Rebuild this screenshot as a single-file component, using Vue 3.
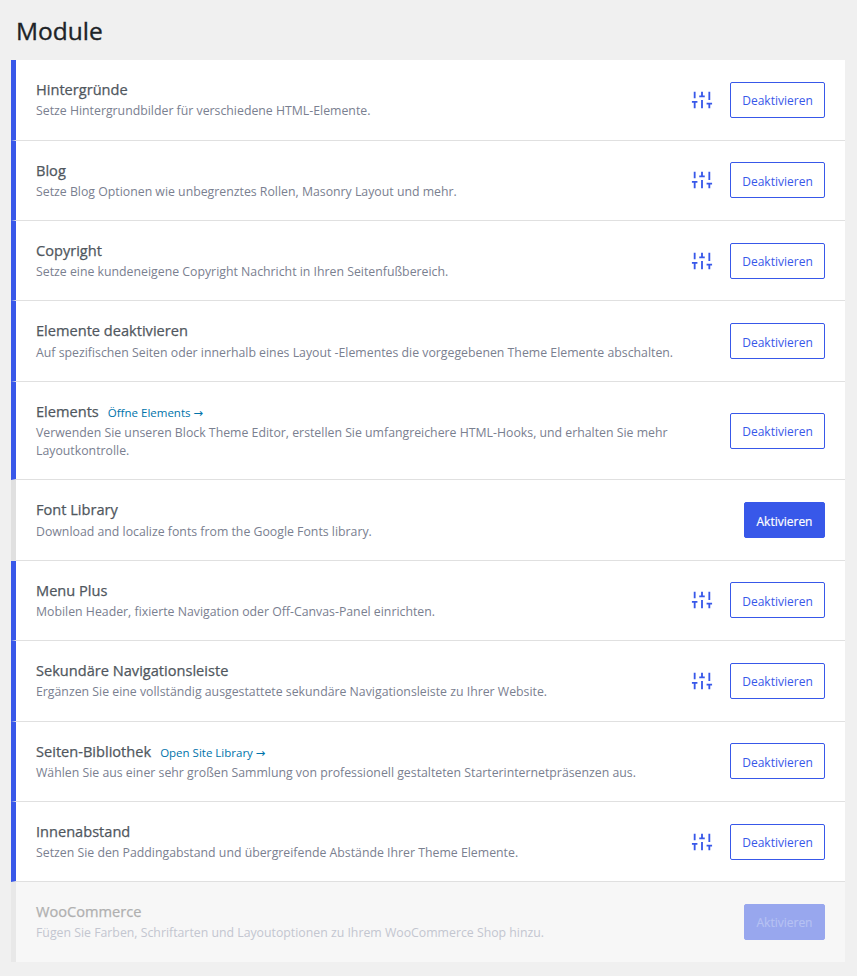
<script setup>
const modules = [
  { title: "Hintergründe", desc: "Setze Hintergrundbilder für verschiedene HTML-Elemente.", active: true, settings: true },
  { title: "Blog", desc: "Setze Blog Optionen wie unbegrenztes Rollen, Masonry Layout und mehr.", active: true, settings: true },
  { title: "Copyright", desc: "Setze eine kundeneigene Copyright Nachricht in Ihren Seitenfußbereich.", active: true, settings: true },
  { title: "Elemente deaktivieren", desc: "Auf spezifischen Seiten oder innerhalb eines Layout -Elementes die vorgegebenen Theme Elemente abschalten.", active: true },
  {
    title: "Elements",
    link: "Öffne Elements",
    desc: "Verwenden Sie unseren Block Theme Editor, erstellen Sie umfangreichere HTML-Hooks, und erhalten Sie mehr Layoutkontrolle.",
    active: true,
  },
  { title: "Font Library", desc: "Download and localize fonts from the Google Fonts library." },
  { title: "Menu Plus", desc: "Mobilen Header, fixierte Navigation oder Off-Canvas-Panel einrichten.", active: true, settings: true },
  { title: "Sekundäre Navigationsleiste", desc: "Ergänzen Sie eine vollständig ausgestattete sekundäre Navigationsleiste zu Ihrer Website.", active: true, settings: true },
  { title: "Seiten-Bibliothek", link: "Open Site Library", desc: "Wählen Sie aus einer sehr großen Sammlung von professionell gestalteten Starterinternetpräsenzen aus.", active: true },
  { title: "Innenabstand", desc: "Setzen Sie den Paddingabstand und übergreifende Abstände Ihrer Theme Elemente.", active: true, settings: true },
  { title: "WooCommerce", desc: "Fügen Sie Farben, Schriftarten und Layoutoptionen zu Ihrem WooCommerce Shop hinzu.", disabled: true },
];
</script>

<template>
  <div class="page">
    <h1 class="heading">Module</h1>
    <div class="list">
      <div
        v-for="item in modules"
        :key="item.title"
        class="row"
        :class="{ active: item.active, disabled: item.disabled }"
      >
        <div class="info">
          <div class="title-line">
            <span class="title">{{ item.title }}</span>
            <a v-if="item.link" class="link" href="#">{{ item.link }} <span class="arrow">→</span></a>
          </div>
          <div class="desc">{{ item.desc }}</div>
        </div>
        <div class="actions">
          <svg
            v-if="item.settings"
            class="sliders"
            width="22"
            height="22"
            viewBox="0 0 24 24"
            fill="none"
            stroke="currentColor"
            stroke-width="2"
          >
            <path d="M4 21v-7M4 10V3M12 21v-9M12 8V3M20 21v-5M20 12V3M1 14h6M9 8h6M17 16h6" />
          </svg>
          <button v-if="item.active" class="btn outline">Deaktivieren</button>
          <button v-else class="btn solid" :disabled="item.disabled">Aktivieren</button>
        </div>
      </div>
    </div>
  </div>
</template>

<style>
html,
body {
  margin: 0;
  background: #f0f0f0;
}
</style>

<style scoped>
.page {
  width: 857px;
  height: 976px;
  box-sizing: border-box;
  padding: 0 12px 0 11px;
  font-family: "Open Sans", "Noto Sans", sans-serif;
  overflow: hidden;
}

.heading {
  margin: 0;
  padding: 14.2px 0 13px 5px;
  font-size: 24.5px;
  line-height: 33px;
  font-weight: 400;
  -webkit-text-stroke: 0.35px #1d2327;
  color: #1d2327;
}

.list {
  background: #fff;
}

.row {
  display: flex;
  align-items: center;
  justify-content: space-between;
  padding: 19px 20px;
  border-left: 5px solid #e0e0e0;
  border-bottom: 1px solid #e0e0e0;
}

.row:last-child {
  border-bottom: none;
}

.row.active {
  border-left-color: #3858e9;
}

.row.disabled {
  background: #f7f7f7;
  border-left-color: #e8e8e8;
}

.info {
  flex: 1;
  min-width: 0;
  padding-right: 40px;
}

.title-line {
  display: flex;
  align-items: baseline;
  gap: 10px;
  height: 23.2px;
}

.title {
  font-size: 14.6px;
  line-height: 21.2px;
  font-weight: 400;
  -webkit-text-stroke: 0.25px currentColor;
  color: #50575e;
}

.link {
  font-size: 11.5px;
  margin-left: -1px;
  color: #0073aa;
  text-decoration: none;
}

.arrow {
  font-family: "DejaVu Sans", sans-serif;
}

.desc {
  font-size: 12.3px;
  line-height: 18.2px;
  color: #7a8090;
}

.disabled .title {
  color: #b0b0b0;
}

.disabled .desc {
  color: #c3c6d0;
}

.actions {
  display: flex;
  align-items: center;
  flex-shrink: 0;
}

.sliders {
  color: #3858e9;
  margin-right: 17px;
}

.btn {
  box-sizing: border-box;
  height: 36px;
  border-radius: 2px;
  font-family: inherit;
  font-size: 12px;
  padding: 2px 0 0;
}

.outline {
  width: 95px;
  background: #fff;
  border: 1px solid #3858e9;
  color: #3858e9;
}

.solid {
  width: 81px;
  background: #3858e9;
  border: 1px solid #3858e9;
  color: #fff;
  -webkit-text-stroke: 0.2px currentColor;
}

.solid:disabled {
  background: #98a7ee;
  border-color: #98a7ee;
  color: #b6c1f3;
}
</style>
